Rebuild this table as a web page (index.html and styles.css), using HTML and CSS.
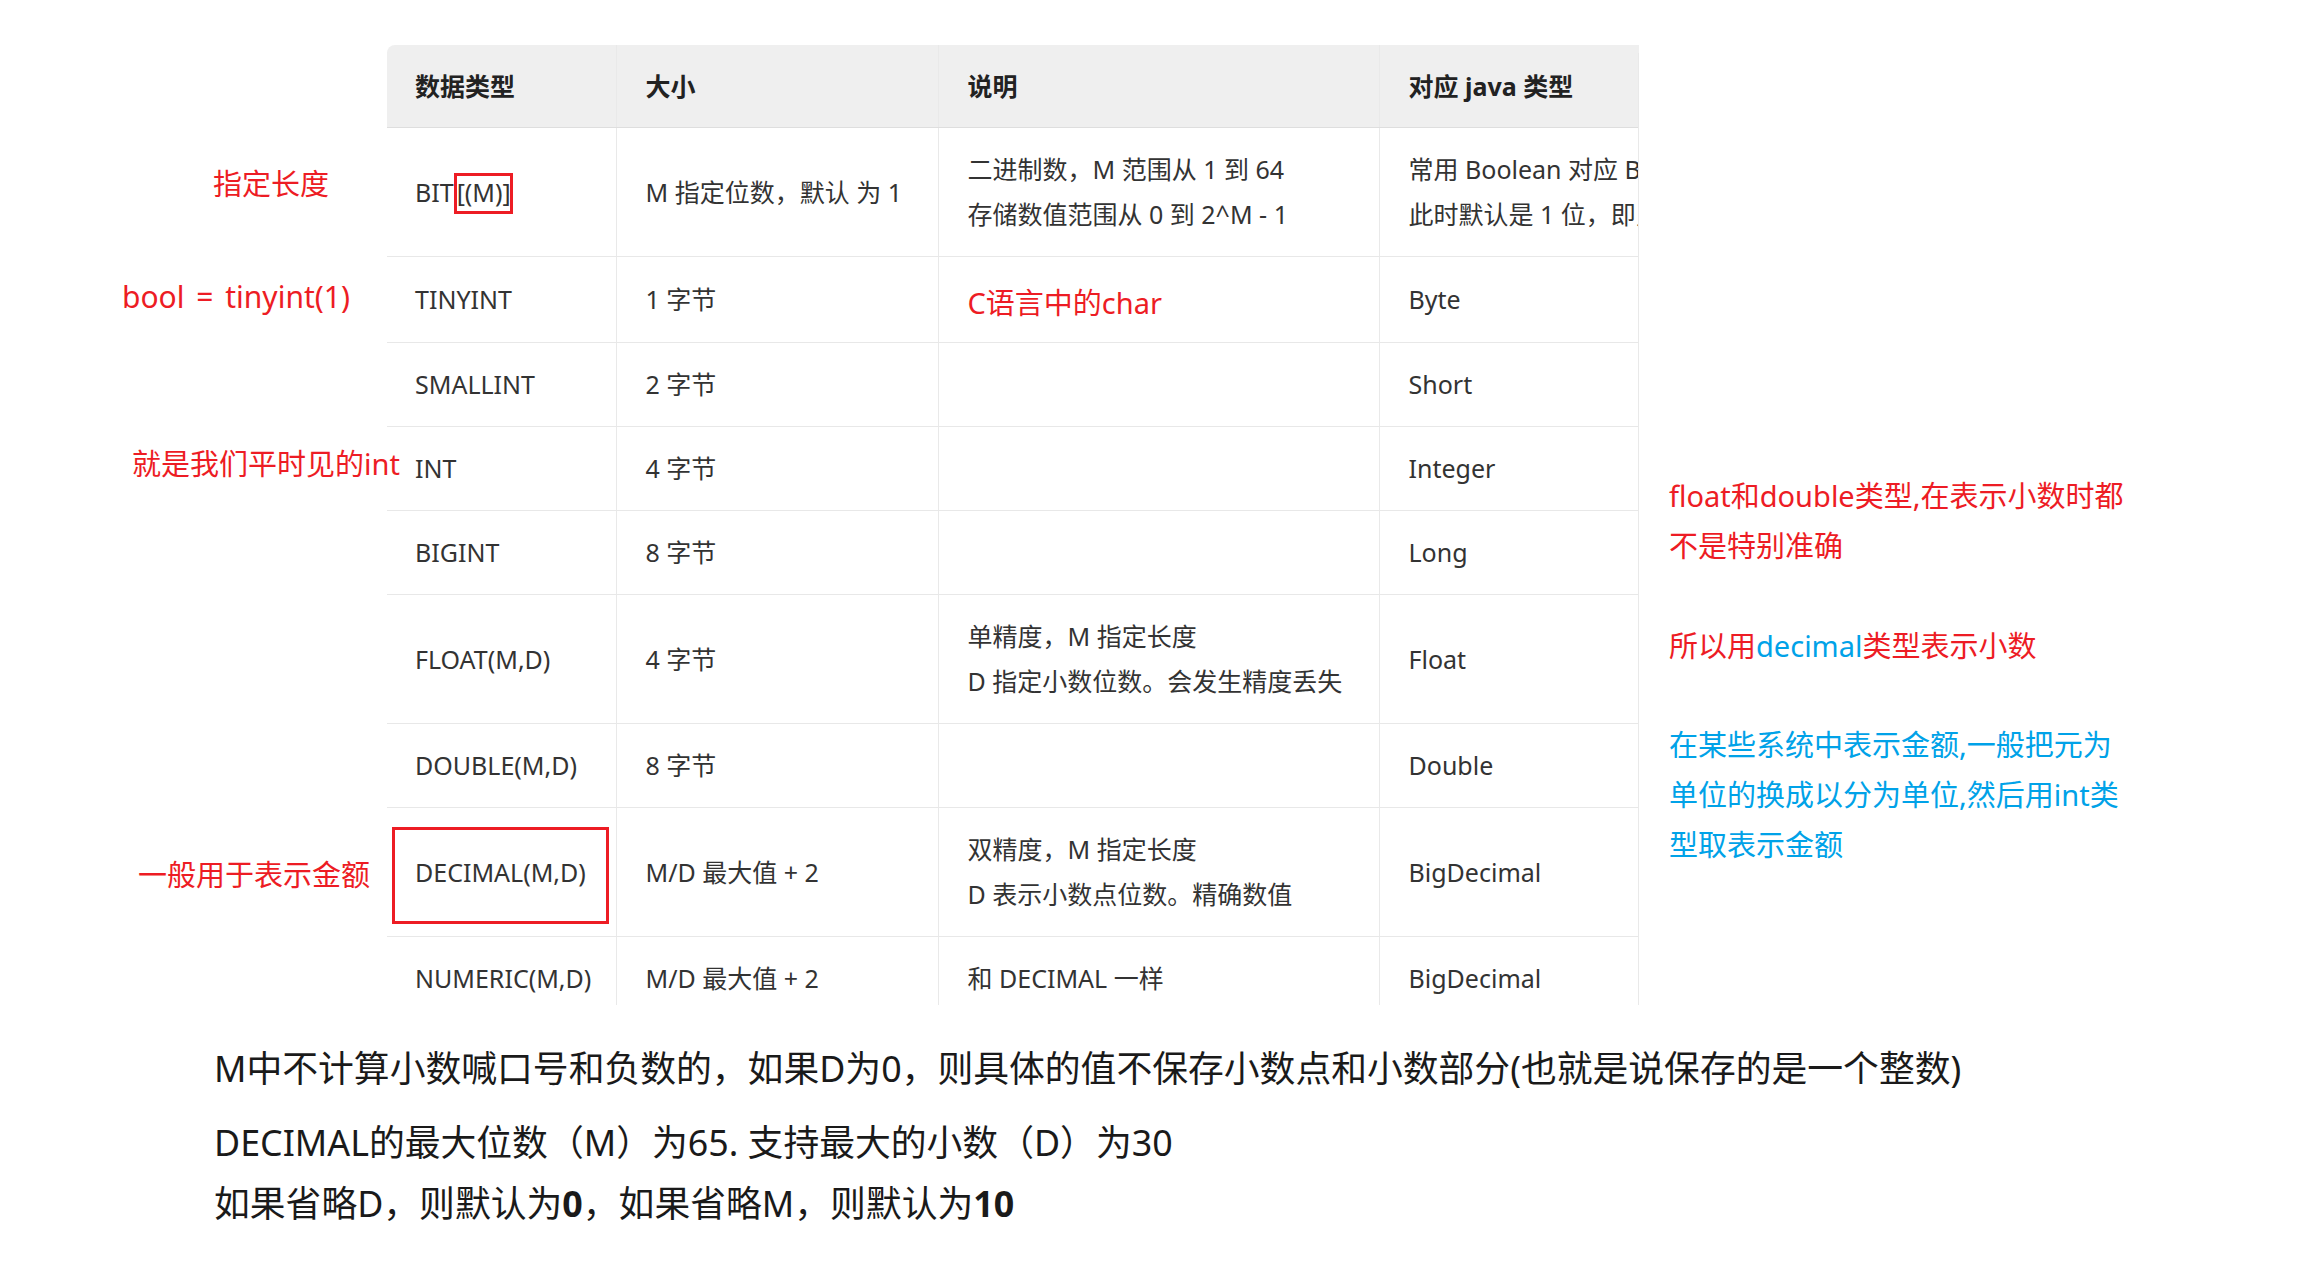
FILE: index.html
```html
<!DOCTYPE html>
<html lang="zh-CN">
<head>
<meta charset="utf-8">
<title>MySQL 数值类型</title>
<link rel="stylesheet" href="styles.css">
</head>
<body>
<div class="page">
  <div class="table-wrap">
    <table class="types">
      <colgroup>
        <col class="c1"><col class="c2"><col class="c3"><col class="c4">
      </colgroup>
      <thead>
        <tr><th>数据类型</th><th>大小</th><th>说明</th><th>对应 java 类型</th></tr>
      </thead>
      <tbody>
        <tr><td>BIT<span class="boxed">[(M)]</span></td><td>M 指定位数，默认 为 1</td><td>二进制数，M 范围从 1 到 64<br>存储数值范围从 0 到 2^M - 1</td><td>常用 Boolean 对应 BIT，<br>此时默认是 1 位，即只能存 0 和 1</td></tr>
        <tr><td>TINYINT</td><td>1 字节</td><td><span class="note-red cell-note">C语言中的char</span></td><td>Byte</td></tr>
        <tr><td>SMALLINT</td><td>2 字节</td><td></td><td>Short</td></tr>
        <tr><td>INT</td><td>4 字节</td><td></td><td>Integer</td></tr>
        <tr><td>BIGINT</td><td>8 字节</td><td></td><td>Long</td></tr>
        <tr><td>FLOAT(M,D)</td><td>4 字节</td><td>单精度，M 指定长度<br>D 指定小数位数。会发生精度丢失</td><td>Float</td></tr>
        <tr><td>DOUBLE(M,D)</td><td>8 字节</td><td></td><td>Double</td></tr>
        <tr><td>DECIMAL(M,D)</td><td>M/D 最大值 + 2</td><td>双精度，M 指定长度<br>D 表示小数点位数。精确数值</td><td>BigDecimal</td></tr>
        <tr><td>NUMERIC(M,D)</td><td>M/D 最大值 + 2</td><td>和 DECIMAL 一样</td><td>BigDecimal</td></tr>
      </tbody>
    </table>
  </div>

  <div class="notes">
    <p class="n1">M中不计算小数喊口号和负数的，如果D为0，则具体的值不保存小数点和小数部分(也就是说保存的是一个整数)</p>
    <p class="n2">DECIMAL的最大位数（M）为65. 支持最大的小数（D）为30</p>
    <p class="n3">如果省略D，则默认为<b>0</b>，如果省略M，则默认为<b>10</b></p>
  </div>

  <div class="ann note-red a-len">指定长度</div>
  <div class="ann note-red a-bool">bool = tinyint(1)</div>
  <div class="ann note-red a-int">就是我们平时见的int</div>
  <div class="ann note-red a-money">一般用于表示金额</div>

  <div class="side">
    <p class="note-red">float和double类型,在表示小数时都<br>不是特别准确</p>
    <p class="note-red s2">所以用<span class="note-blue">decimal</span>类型表示小数</p>
    <p class="note-blue s3">在某些系统中表示金额,一般把元为<br>单位的换成以分为单位,然后用int类<br>型取表示金额</p>
  </div>

  <div class="box box-dec"></div>
</div>
</body>
</html>
```

FILE: styles.css
```css
html, body {
  margin: 0;
  padding: 0;
  background: #ffffff;
}

.page {
  position: relative;
  width: 2301px;
  height: 1270px;
  overflow: hidden;
  font-family: "Noto Sans", "Noto Sans CJK SC", sans-serif;
  color: #333333;
}

.table-wrap {
  position: relative;
  margin-left: 387px;
  padding-top: 45px;
  width: 1252px;
  height: 1005px;
  box-sizing: border-box;
  overflow: hidden;
}
.table-wrap::after {
  content: "";
  position: absolute;
  top: 53px;
  right: 0;
  bottom: 0;
  width: 1px;
  background: #e9e9e9;
}

.types {
  border-collapse: collapse;
  table-layout: fixed;
  width: 1400px;
  font-size: 25px;
  line-height: 45px;
  white-space: nowrap;
  border-radius: 8px 8px 0 0;
  overflow: hidden;
}

.c1 { width: 229px; }
.c2 { width: 322px; }
.c3 { width: 441px; }
.c4 { width: 408px; }

.types th,
.types td {
  padding: 19px 0 19px 29px;
  text-align: left;
  vertical-align: middle;
  border-left: 1px solid #e9e9e9;
  overflow: hidden;
}

.types th:first-child,
.types td:first-child {
  border-left: none;
  padding-left: 28px;
}

.types thead th {
  background: #efefef;
  color: #222222;
  font-weight: 700;
  border-bottom: 1px solid #dedede;
  height: 45px;
  padding-top: 19px;
  padding-bottom: 18px;
}

.types tbody td {
  border-bottom: 1px solid #e8e8e8;
  height: 45px;
}

.types tbody tr:first-child td,
.types tbody tr:nth-child(6) td,
.types tbody tr:nth-child(8) td {
  height: 90px;
}

.boxed {
  position: relative;
  margin-left: 3px;
}
.boxed::after {
  content: "";
  position: absolute;
  left: -3px;
  right: -2px;
  top: -2px;
  bottom: -5px;
  border: 3px solid #ed1c24;
}

.note-red { color: #ed1c24; }
.note-blue { color: #00a2e8; }

.cell-note {
  font-size: 29px;
  position: relative;
  top: 4px;
}

.notes {
  margin: 26px 0 0 214px;
  color: #1a1a1a;
  font-size: 35.8px;
}
.notes p { margin: 0; white-space: nowrap; }
.notes .n1 { line-height: 74px; }
.notes .n2 { line-height: 74px; }
.notes .n3 { line-height: 48px; }
.notes b { font-weight: 700; }

.ann {
  position: absolute;
  font-size: 29px;
  line-height: 40px;
  white-space: nowrap;
}
.a-len   { left: 213px; top: 164px; }
.a-bool  { left: 122px; top: 277px; font-size: 30px; word-spacing: 4px; }
.a-int   { left: 132px; top: 444px; }
.a-money { left: 138px; top: 855px; }

.side {
  position: absolute;
  left: 1669px;
  top: 471px;
  font-size: 29px;
  line-height: 50px;
}
.side p { margin: 0; white-space: nowrap; }
.side .s2 { margin-top: 50px; }
.side .s3 { margin-top: 49px; }

.box {
  position: absolute;
  border: 3px solid #ed1c24;
  box-sizing: border-box;
}
.box-dec { left: 392px; top: 827px; width: 217px; height: 97px; }
```
